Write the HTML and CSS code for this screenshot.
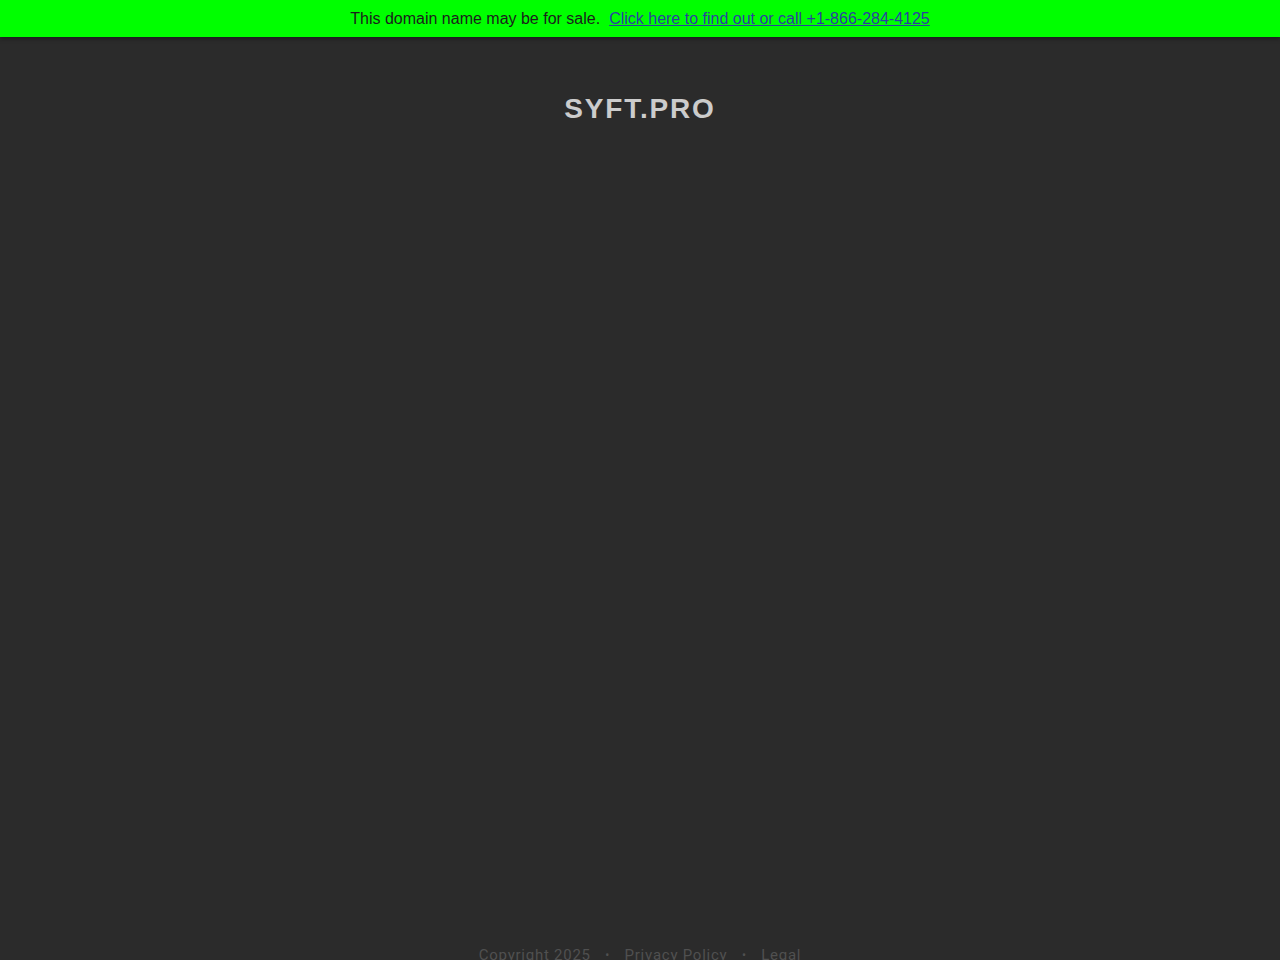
FILE: index.html
```html
<!DOCTYPE html>
<html>
<head>
<meta charset="utf-8">
<link rel="stylesheet" href="styles.css">
</head>
<body>
<div class="banner">
  <span class="sale">This domain name may be for sale.</span>
  <a class="sale-link" href="#">Click here to find out or call +1-866-284-4125</a>
</div>
<main class="main">
  <h1 class="domain">SYFT.PRO</h1>
</main>
<footer class="footer">
  <span>Copyright 2025</span>
  <span class="dot">•</span>
  <a href="#">Privacy Policy</a>
  <span class="dot">•</span>
  <a href="#">Legal</a>
</footer>
</body>
</html>
```
FILE: styles.css
```css
html, body {
  margin: 0;
  padding: 0;
}
body {
  background: #2b2b2b;
  font-family: "Liberation Sans", Arial, sans-serif;
  overflow: hidden;
}
.banner {
  height: 37px;
  background: #00ff00;
  display: flex;
  justify-content: center;
  align-items: center;
  gap: 9px;
  font-size: 16px;
  color: #1c1c1c;
  box-shadow: 0 2px 4px rgba(0,0,0,0.35);
  position: relative;
  z-index: 1;
}
.sale-link {
  color: #2a3fa0;
  text-decoration: underline;
}
.main {
  height: 903px;
  display: flex;
  justify-content: center;
  align-items: flex-start;
}
.domain {
  margin: 56px 0 0;
  font-size: 28px;
  font-weight: bold;
  letter-spacing: 1.8px;
  color: #cccccc;
  line-height: 32px;
}
.footer {
  display: flex;
  justify-content: center;
  gap: 14.5px;
  font-family: Roboto, "Liberation Sans", sans-serif;
  font-size: 15px;
  letter-spacing: 0.75px;
  color: #505050;
  line-height: 30px;
}
.footer a {
  color: #505050;
  text-decoration: none;
}
.dot {
  font-size: 12px;
}
```
